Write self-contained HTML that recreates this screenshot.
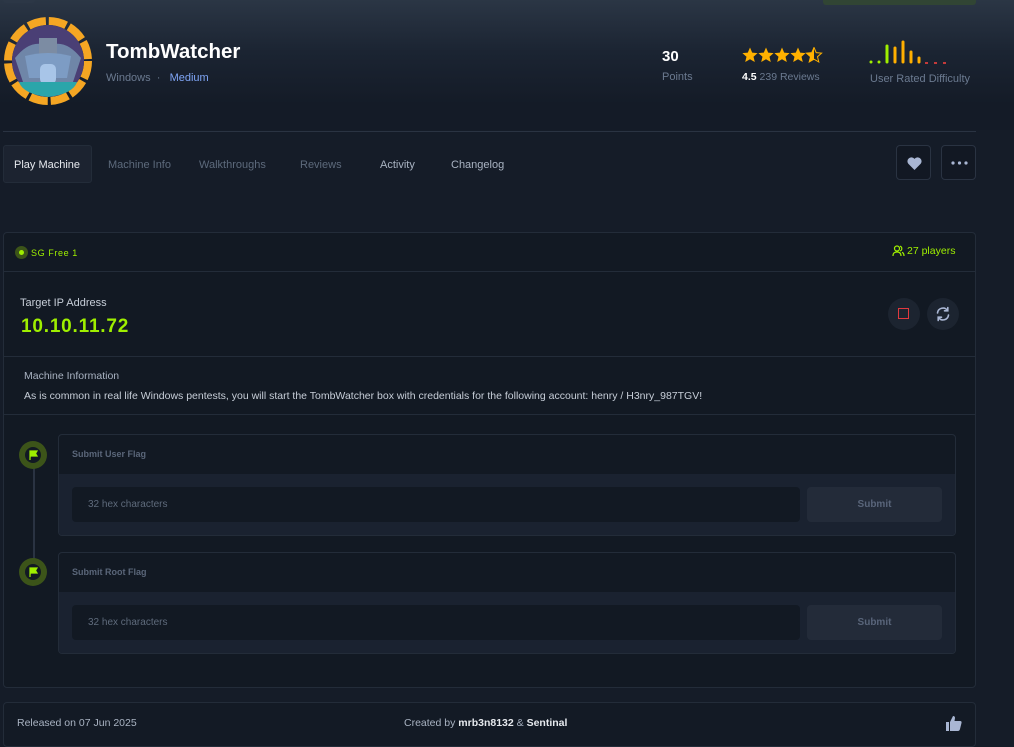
<!DOCTYPE html>
<html><head><meta charset="utf-8"><style>
*{box-sizing:border-box;margin:0;padding:0}
body{width:1014px;height:742px;overflow:hidden;background:#151c28;font-family:"Liberation Sans",sans-serif;position:relative;color:#fff}
.abs{position:absolute}
.hdr{left:0;top:0;width:1014px;height:130px;background:linear-gradient(180deg,#2b3645 0%,#1b2432 40%,#141b27 80%)}
.tab{top:159px;font-size:11px;color:#5d6a7c}
.btn{border:1px solid #2a3342;border-radius:4px;background:#121823}
.card{left:3px;top:232px;width:973px;height:456px;border:1px solid #232c39;border-radius:4px;background:#121923}
.sep{height:1px;background:#232c39;position:absolute;left:0;right:0}
.flag{border:1px solid #232c39;border-radius:4px;background:#121923;left:54px;width:898px;height:102px;overflow:hidden}
.flag .in{position:absolute;left:0;right:0;top:39px;bottom:0;background:#1a2230}
.inp{position:absolute;left:13px;top:13px;width:728px;height:35px;background:#121923;border-radius:4px;font-size:10px;color:#5f6b7c;padding:12px 16px}
.sub{position:absolute;left:748px;top:13px;width:135px;height:35px;background:#232b39;border-radius:4px;font-size:10px;color:#59657a;text-align:center;padding-top:12px;font-weight:bold}
.ft{position:absolute;top:14px;left:13px;font-size:9px;color:#5a6679;font-weight:bold}
.dot{width:28px;height:28px;border-radius:50%;background:#3c5419}
.dot i{position:absolute;left:6px;top:6px;width:16px;height:16px;border-radius:50%;background:#121923}
</style></head><body>
<div class="abs hdr"></div>
<div class="abs" style="left:3px;top:0;width:32px;height:3px;background:#2c3746;border-radius:0 0 3px 3px"></div>
<div class="abs" style="left:823px;top:0;width:153px;height:5px;background:#314534;border-radius:0 0 3px 3px"></div>
<svg class="abs" style="left:3px;top:16px" width="90" height="90" viewBox="0 0 90 90">
<circle cx="45" cy="45" r="40" fill="none" stroke="#f5a623" stroke-width="8" stroke-dasharray="18 3"/>
<circle cx="45" cy="45" r="36" fill="#4a3f75"/>
<path d="M12 42 Q28 22 45 30 Q62 22 78 42 L70 66 L20 66Z" fill="#6f86a8"/>
<rect x="36" y="22" width="18" height="16" fill="#7c8ca3"/>
<path d="M22 40 Q45 34 68 40 L64 62 L26 62Z" fill="#7d9cc4"/>
<rect x="37" y="48" width="16" height="20" rx="5" fill="#a8c5e8"/>
<path d="M16 66 L74 66 Q70 78 45 81 Q20 78 16 66Z" fill="#2ba5aa"/>
</svg>
<div class="abs" style="left:106px;top:40px;font-size:20.5px;font-weight:bold">TombWatcher</div>
<div class="abs" style="left:106px;top:72px;font-size:11px;color:#6b7a90">Windows &nbsp;· &nbsp; <span style="color:#7fa5f5">Medium</span></div>
<div class="abs" style="left:662px;top:48px;font-size:15px;font-weight:bold">30</div>
<div class="abs" style="left:662px;top:71px;font-size:11px;color:#6b7a90">Points</div>
<svg class="abs" style="left:742px;top:47px" width="82" height="17" viewBox="0 0 82 17">
<g fill="#ffb100">
<path d="M8 0.5L10.2 5.6L15.6 6.1L11.5 9.7L12.8 15L8 12.2L3.2 15L4.5 9.7L0.4 6.1L5.8 5.6Z"/>
<path transform="translate(16 0)" d="M8 0.5L10.2 5.6L15.6 6.1L11.5 9.7L12.8 15L8 12.2L3.2 15L4.5 9.7L0.4 6.1L5.8 5.6Z"/>
<path transform="translate(32 0)" d="M8 0.5L10.2 5.6L15.6 6.1L11.5 9.7L12.8 15L8 12.2L3.2 15L4.5 9.7L0.4 6.1L5.8 5.6Z"/>
<path transform="translate(48 0)" d="M8 0.5L10.2 5.6L15.6 6.1L11.5 9.7L12.8 15L8 12.2L3.2 15L4.5 9.7L0.4 6.1L5.8 5.6Z"/>
<path transform="translate(64 0)" d="M8 0.5L5.8 5.6L0.4 6.1L4.5 9.7L3.2 15L8 12.2Z"/>
</g>
<path transform="translate(64 0)" d="M8 0.5L10.2 5.6L15.6 6.1L11.5 9.7L12.8 15L8 12.2L3.2 15L4.5 9.7L0.4 6.1L5.8 5.6Z" fill="none" stroke="#ffb100" stroke-width="1"/>
</svg>
<div class="abs" style="left:742px;top:71px;font-size:10.5px;color:#6b7a90"><b style="color:#fff">4.5</b> 239 Reviews</div>
<svg class="abs" style="left:868px;top:38px" width="90" height="28">
<g stroke-linecap="round" stroke-width="3">
<line x1="3" y1="24" x2="3" y2="24" stroke="#9fef00"/><line x1="11" y1="24" x2="11" y2="24" stroke="#9fef00"/>
<line x1="19" y1="24" x2="19" y2="8" stroke="#9fef00"/><line x1="27" y1="24" x2="27" y2="10" stroke="#ffaf00"/>
<line x1="35" y1="24" x2="35" y2="4" stroke="#ffaf00"/><line x1="43" y1="24" x2="43" y2="14" stroke="#ffaf00"/>
<line x1="51" y1="24" x2="51" y2="20" stroke="#ffaf00"/></g>
<g stroke="#c43a3a" stroke-width="2"><line x1="57" y1="25" x2="60" y2="25"/><line x1="66" y1="25" x2="69" y2="25"/><line x1="75" y1="25" x2="78" y2="25"/></g>
</svg>
<div class="abs" style="left:870px;top:73px;font-size:11px;color:#6b7a90">User Rated Difficulty</div>
<div class="abs" style="left:3px;top:131px;width:973px;height:1px;background:#2a3342"></div>
<div class="abs" style="left:3px;top:145px;width:89px;height:38px;background:#1c2330;border:1px solid #232c39;border-radius:3px"></div>
<div class="abs tab" style="left:14px;color:#e6e9ee">Play Machine</div>
<div class="abs tab" style="left:108px">Machine Info</div>
<div class="abs tab" style="left:199px">Walkthroughs</div>
<div class="abs tab" style="left:300px">Reviews</div>
<div class="abs tab" style="left:380px;color:#a9b3c2">Activity</div>
<div class="abs tab" style="left:451px;color:#a9b3c2">Changelog</div>
<div class="abs btn" style="left:896px;top:145px;width:35px;height:35px"><svg style="position:absolute;left:10px;top:11px" width="15" height="13" viewBox="0 0 24 21"><path d="M12 21L2 11A5.5 5.5 0 0 1 12 3A5.5 5.5 0 0 1 22 11Z" fill="#a9b6d3"/></svg></div>
<div class="abs btn" style="left:941px;top:145px;width:35px;height:35px"><svg style="position:absolute;left:9px;top:15px" width="17" height="4"><circle cx="2" cy="2" r="1.6" fill="#a9b6d3"/><circle cx="8.5" cy="2" r="1.6" fill="#a9b6d3"/><circle cx="15" cy="2" r="1.6" fill="#a9b6d3"/></svg></div>

<div class="abs card">
 <div class="abs" style="left:11px;top:13px;width:13px;height:13px;border-radius:50%;background:#3c5419"><i style="position:absolute;left:4px;top:4px;width:5px;height:5px;border-radius:50%;background:#9fef00"></i></div>
 <div class="abs" style="left:27px;top:15px;font-size:9px;color:#9fef00;letter-spacing:.6px">SG Free 1</div>
 <svg class="abs" style="left:888px;top:12px" width="13" height="12" viewBox="0 0 13 12" fill="none" stroke="#9fef00" stroke-width="1.2"><circle cx="5" cy="3.5" r="2.5"/><path d="M1 11Q1 7 5 7Q9 7 9 11"/><path d="M8 1.2A2.5 2.5 0 0 1 8 6M10 7.3Q12 8 12 11"/></svg>
 <div class="abs" style="left:903px;top:12px;font-size:10.5px;color:#9fef00">27 players</div>
 <div class="sep" style="top:38px"></div>
 <div class="abs" style="left:16px;top:64px;font-size:11px;color:#c7ced8">Target IP Address</div>
 <div class="abs" style="left:17px;top:83px;font-size:19px;font-weight:bold;color:#9fef00;letter-spacing:0.8px">10.10.11.72</div>
 <div class="abs" style="left:884px;top:65px;width:32px;height:32px;border-radius:50%;background:#1c2430"><i style="position:absolute;left:10px;top:10px;width:11px;height:11px;border:1.5px solid #e0393e"></i></div>
 <div class="abs" style="left:923px;top:65px;width:32px;height:32px;border-radius:50%;background:#1c2430"><svg style="position:absolute;left:8px;top:8px" width="16" height="16" viewBox="0 0 16 16" fill="none" stroke="#a9b6d3" stroke-width="1.6" stroke-linecap="round"><path d="M2.5 7A5.5 5.5 0 0 1 12.5 4.5M13.5 9A5.5 5.5 0 0 1 3.5 11.5"/><path d="M12.8 1.5V4.8H9.5M3.2 14.5V11.2H6.5"/></svg></div>
 <div class="sep" style="top:123px"></div>
 <div class="abs" style="left:20px;top:137px;font-size:10.5px;color:#a9b3c2">Machine Information</div>
 <div class="abs" style="left:20px;top:157px;font-size:10.5px;color:#c7ced8">As is common in real life Windows pentests, you will start the TombWatcher box with credentials for the following account: henry / H3nry_987TGV!</div>
 <div class="sep" style="top:181px"></div>
 <div class="abs" style="left:29px;top:225px;width:2px;height:110px;background:#2a3342"></div>
 <div class="abs dot" style="top:208px;left:15px"><i></i><svg style="position:absolute;left:10px;top:9px" width="9" height="10" viewBox="0 0 9 10"><path d="M1 10V1H8L6.5 3.5L8 6H2" fill="#9fef00" stroke="#9fef00" stroke-width="1.2"/></svg></div>
 <div class="abs dot" style="top:325px;left:15px"><i></i><svg style="position:absolute;left:10px;top:9px" width="9" height="10" viewBox="0 0 9 10"><path d="M1 10V1H8L6.5 3.5L8 6H2" fill="#9fef00" stroke="#9fef00" stroke-width="1.2"/></svg></div>
 <div class="abs flag" style="top:201px"><div class="ft">Submit User Flag</div><div class="in"><div class="inp">32 hex characters</div><div class="sub">Submit</div></div></div>
 <div class="abs flag" style="top:319px"><div class="ft">Submit Root Flag</div><div class="in"><div class="inp">32 hex characters</div><div class="sub">Submit</div></div></div>
</div>
<div class="abs" style="left:3px;top:702px;width:973px;height:45px;border:1px solid #232c39;border-radius:4px;background:#131a25"></div>
<div class="abs" style="left:17px;top:717px;font-size:10.5px;color:#a9b3c2">Released on 07 Jun 2025</div>
<div class="abs" style="left:404px;top:717px;font-size:10.5px;color:#a9b3c2">Created by <b style="color:#e6e9ee">mrb3n8132</b> &amp; <b style="color:#e6e9ee">Sentinal</b></div>
<svg class="abs" style="left:946px;top:715px" width="16" height="16" viewBox="0 0 16 16"><rect x="0" y="7" width="3" height="9" fill="#a9b6d3"/><path d="M4 7L7 1Q9 1 9 3L8.5 6H14Q16 6 15.5 8L14 14Q13.5 16 12 16H4Z" fill="#a9b6d3"/></svg>
</body></html>
